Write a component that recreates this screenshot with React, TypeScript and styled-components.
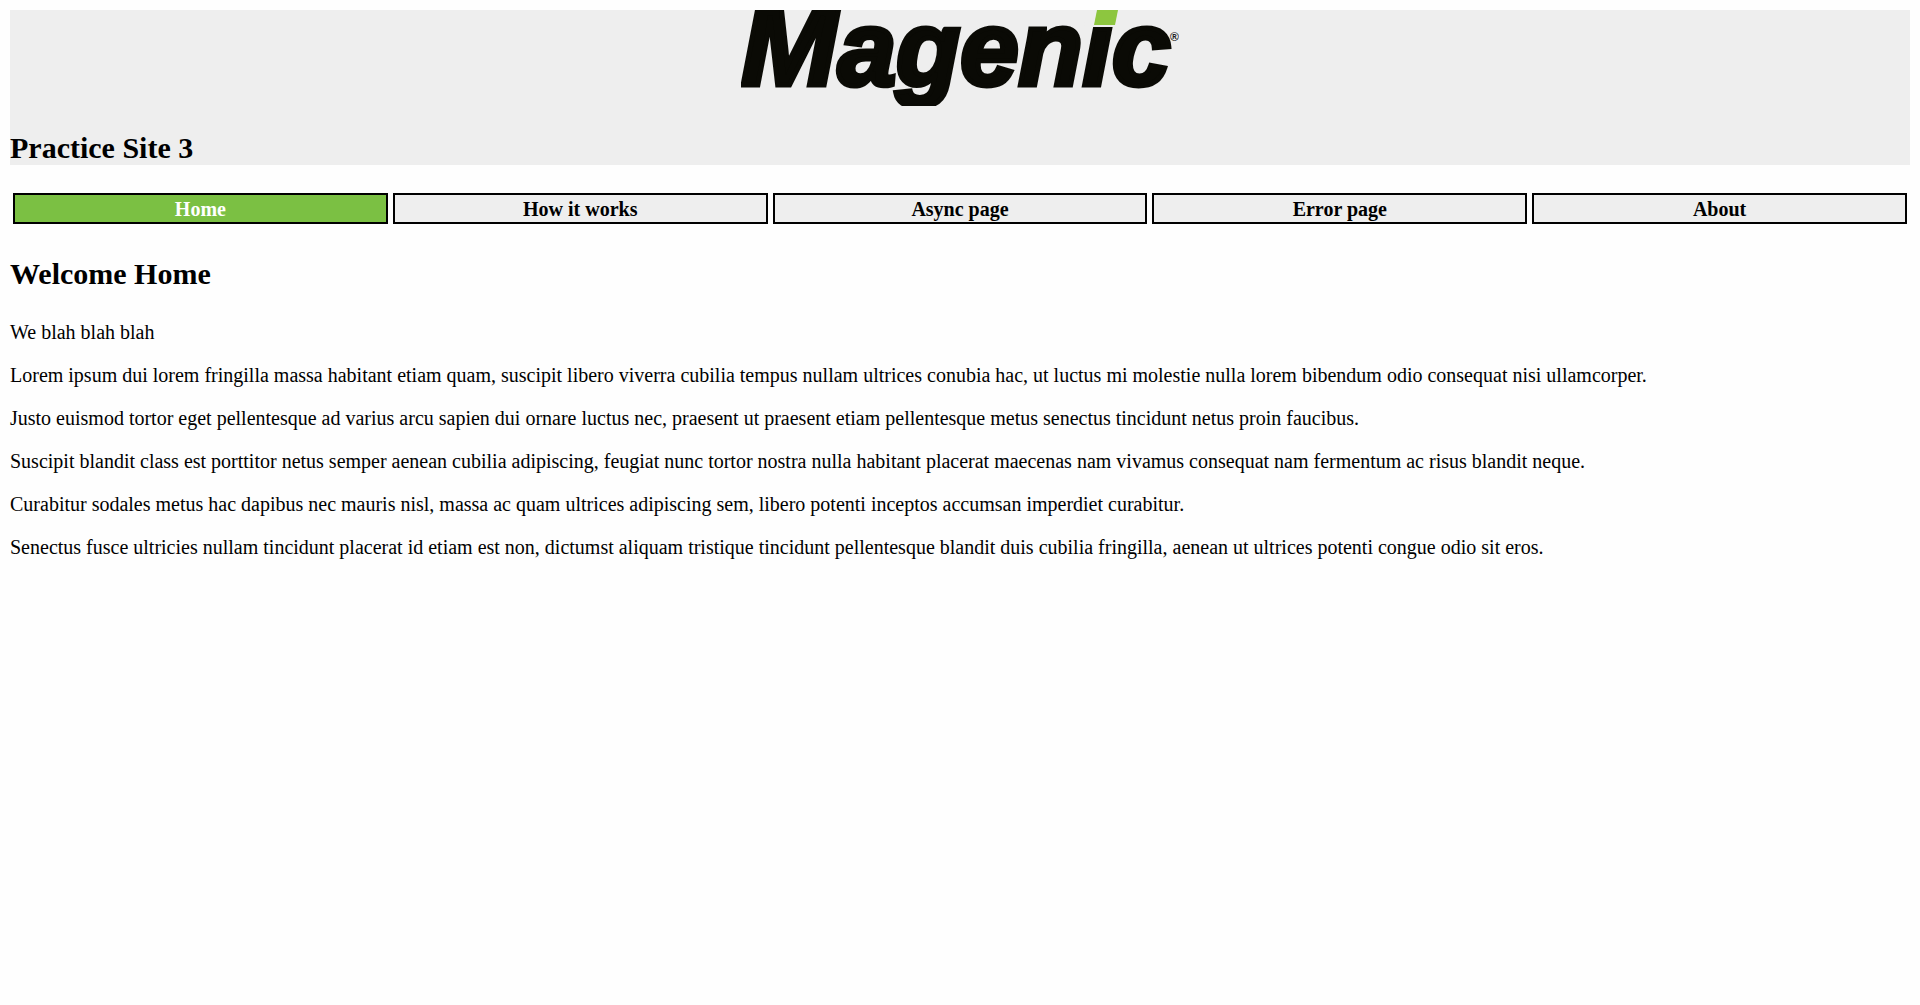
import React from 'react';
import styled, { createGlobalStyle } from 'styled-components';

const GlobalStyle = createGlobalStyle`
  body {
    margin: 10px;
    background: #fefefe;
    color: #000;
    font-family: 'Liberation Serif', 'Times New Roman', serif;
    font-size: 20px;
    line-height: 23px;
  }
`;

const Header = styled.header`
  background: #eee;
`;

const Logo = styled.svg`
  display: block;
  width: 438px;
  height: 96px;
  margin: 0 auto;
`;

const Wordmark = styled.text`
  font-family: 'Liberation Sans', Arial, sans-serif;
  font-size: 105px;
  font-weight: 700;
  font-style: italic;
  fill: #0a0a05;
  stroke: #0a0a05;
  stroke-width: 5px;
`;

const Initial = styled.tspan`
  font-size: 116px;
`;

const Mark = styled.text`
  font-family: 'Liberation Sans', Arial, sans-serif;
  font-size: 12px;
  font-weight: 700;
  fill: #222;
`;

const Title = styled.h2`
  margin: 0;
  padding-top: 25px;
  font-size: 30px;
  line-height: 34px;
`;

const Nav = styled.nav`
  display: flex;
  gap: 5px;
  margin-top: 28px;
  padding: 0 3px;
`;

const NavLink = styled.a<{ $active?: boolean }>`
  flex: 1;
  box-sizing: border-box;
  padding: 3px 2px 1px;
  border: 2px solid #000;
  background: ${(p) => (p.$active ? '#7bc043' : '#eee')};
  color: ${(p) => (p.$active ? '#fff' : '#000')};
  font-weight: 700;
  text-align: center;
  text-decoration: none;
`;

const Content = styled.main`
  display: flex;
  flex-direction: column;
  gap: 20px;
  padding-top: 8px;
`;

const PageTitle = styled(Title)`
  padding-bottom: 10px;
`;

const Paragraph = styled.p`
  margin: 0;
`;

const links = ['Home', 'How it works', 'Async page', 'Error page', 'About'];

const paragraphs = [
  'We blah blah blah',
  'Lorem ipsum dui lorem fringilla massa habitant etiam quam, suscipit libero viverra cubilia tempus nullam ultrices conubia hac, ut luctus mi molestie nulla lorem bibendum odio consequat nisi ullamcorper.',
  'Justo euismod tortor eget pellentesque ad varius arcu sapien dui ornare luctus nec, praesent ut praesent etiam pellentesque metus senectus tincidunt netus proin faucibus.',
  'Suscipit blandit class est porttitor netus semper aenean cubilia adipiscing, feugiat nunc tortor nostra nulla habitant placerat maecenas nam vivamus consequat nam fermentum ac risus blandit neque.',
  'Curabitur sodales metus hac dapibus nec mauris nisl, massa ac quam ultrices adipiscing sem, libero potenti inceptos accumsan imperdiet curabitur.',
  'Senectus fusce ultricies nullam tincidunt placerat id etiam est non, dictumst aliquam tristique tincidunt pellentesque blandit duis cubilia fringilla, aenean ut ultrices potenti congue odio sit eros.',
];

export default function App() {
  return (
    <>
      <GlobalStyle />
      <Header>
        <Logo viewBox="0 0 438 96" role="img" aria-label="Magenic">
          <Wordmark x="0" y="75">
            <Initial>M</Initial>agenic
          </Wordmark>
          <path d="M346 0H382L378 17H343Z" fill="#eee" />
          <path d="M356 0H377L374 15H353Z" fill="#8dc63f" />
          <Mark x="429" y="31">®</Mark>
        </Logo>
        <Title as="h1">Practice Site 3</Title>
      </Header>
      <Nav aria-label="Main">
        {links.map((label, i) => (
          <NavLink key={label} href="#" $active={i === 0} aria-current={i === 0 ? 'page' : undefined}>
            {label}
          </NavLink>
        ))}
      </Nav>
      <Content>
        <PageTitle>Welcome Home</PageTitle>
        {paragraphs.map((text) => (
          <Paragraph key={text}>{text}</Paragraph>
        ))}
      </Content>
    </>
  );
}
